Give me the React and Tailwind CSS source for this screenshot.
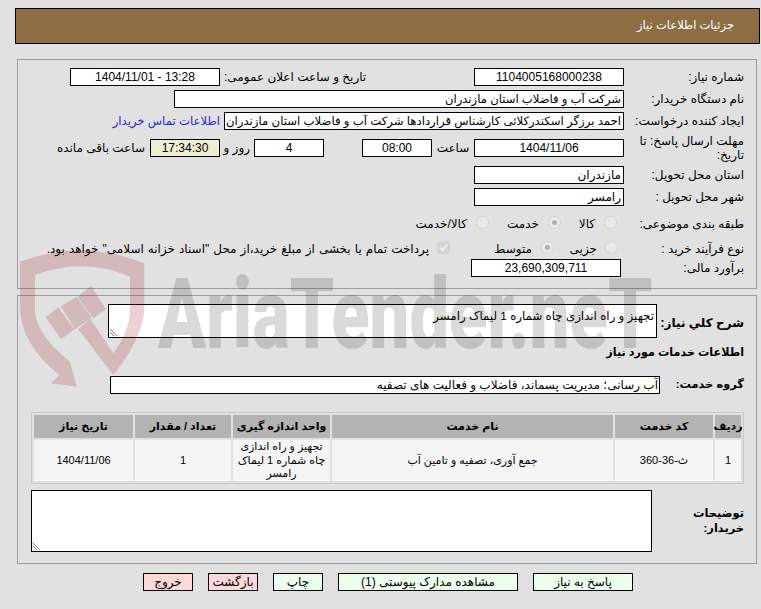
const Box = ({ className = "", children }) => (
  <div className={`h-[18px] shrink-0 border border-black flex items-center overflow-hidden whitespace-nowrap leading-none ${className.includes("bg-") ? "" : "bg-white"} ${className}`}>{children}</div>
);
const Radio = ({ checked }) => (
  <span className="w-[13px] h-[13px] rounded-full border border-[#d4d4d4] bg-[#e9e9e9] flex items-center justify-center shrink-0">
    {checked && <span className="w-[5px] h-[5px] rounded-full bg-[#b0b0b0]" />}
  </span>
);
const Btn = ({ w, red, children }) => (
  <div className={`h-[18px] shrink-0 border border-black flex items-center justify-center whitespace-nowrap ${w} ${red ? "bg-[#ffd9d9]" : "bg-[#ecffec]"}`}>{children}</div>
);
const Label = ({ className = "", children }) => <div className={`text-right shrink-0 ${className}`}>{children}</div>;
const Th = ({ w, children }) => <div className={`${w} h-[23px] bg-[#b3b3b3] flex items-center justify-center font-bold text-[11px] whitespace-nowrap`}>{children}</div>;
const Td = ({ w, children }) => <div className={`${w} h-[41px] bg-[#f5f5f5] flex items-center justify-center text-center text-[11px] leading-[13.5px]`}>{children}</div>;

export default function App() {
  return (
    <div dir="rtl" className="relative w-[761px] h-[609px] overflow-hidden bg-[#e1e1e1] text-[12px] text-black pt-[8px] pr-[1px] pl-[15px]" style={{ fontFamily: '"Liberation Sans", "DejaVu Sans", sans-serif' }}>
      <div className="h-[36px] bg-[#8d6e42] border border-black flex items-center pr-[25px] text-white text-[11.5px]">جزئیات اطلاعات نیاز</div>

      <section className="mt-[15px] mr-[3px] ml-[2px] h-[230px] border border-[#9d9d9d] pr-[12px] pt-[8px]">
        <div className="flex h-[18px] items-center">
          <Label className="w-[120px]">شماره نیاز:</Label>
          <Box className="w-[150px] justify-center">1104005168000238</Box>
          <div className="w-[254px] shrink-0 flex justify-end pl-[4px] whitespace-nowrap">تاریخ و ساعت اعلان عمومی:</div>
          <Box className="w-[150px] justify-center"><span dir="ltr">1404/11/01 - 13:28</span></Box>
        </div>
        <div className="flex h-[18px] items-center mt-[4px]">
          <Label className="w-[120px]">نام دستگاه خریدار:</Label>
          <Box className="w-[450px] px-[2px] text-[11.6px]">شرکت آب و فاضلاب استان مازندران</Box>
        </div>
        <div className="flex h-[18px] items-center mt-[4px]">
          <Label className="w-[120px] whitespace-nowrap">ایجاد کننده درخواست:</Label>
          <Box className="w-[400px] px-[2px] text-[11.7px]">احمد برزگر اسکندرکلائی کارشناس قراردادها شرکت آب و فاضلاب استان مازندران</Box>
          <div className="pr-[4px] text-[#2a2ad8] whitespace-nowrap text-[11.7px]">اطلاعات تماس خریدار</div>
        </div>
        <div className="flex h-[28px] items-center mt-[4px]">
          <Label className="w-[120px] leading-[14px] pl-[6px]">مهلت ارسال پاسخ: تا تاریخ:</Label>
          <Box className="w-[150px] justify-center">1404/11/06</Box>
          <div className="w-[42px] text-center">ساعت</div>
          <Box className="w-[70px] justify-center">08:00</Box>
          <div className="w-[38px]"></div>
          <Box className="w-[70px] justify-center">4</Box>
          <div className="w-[34px] pr-[4px]">روز و</div>
          <Box className="w-[70px] justify-center bg-[#eeeed2]">17:34:30</Box>
          <div className="pr-[5px] whitespace-nowrap">ساعت باقی مانده</div>
        </div>
        <div className="flex h-[18px] items-center mt-[4px]">
          <Label className="w-[120px]">استان محل تحویل:</Label>
          <Box className="w-[150px] px-[2px]">مازندران</Box>
        </div>
        <div className="flex h-[18px] items-center mt-[4px]">
          <Label className="w-[120px]">شهر محل تحویل :</Label>
          <Box className="w-[150px] px-[2px]">رامسر</Box>
        </div>
        <div className="flex h-[18px] items-center mt-[7px]">
          <Label className="w-[120px] pt-[3px]">طبقه بندی موضوعی:</Label>
          <div className="w-[7px]"></div>
          <Radio />
          <span className="w-[43px] pr-[9px] pt-[3px]">کالا</span>
          <Radio checked />
          <span className="w-[59px] pr-[9px] pt-[3px]">خدمت</span>
          <Radio />
          <span className="pr-[9px] pt-[3px]">کالا/خدمت</span>
        </div>
        <div className="flex h-[18px] items-center mt-[7px]">
          <Label className="w-[120px] pt-[3px]">نوع فرآیند خرید :</Label>
          <div className="w-[6px]"></div>
          <Radio />
          <span className="w-[51px] pr-[8px] pt-[3px]">جزیی</span>
          <Radio checked />
          <span className="w-[91px] pr-[9px] pt-[3px]">متوسط</span>
          <span className="w-[13px] h-[13px] rounded-[2px] bg-[#d4d4d4] flex items-center justify-center shrink-0">
            <svg viewBox="0 0 12 12" className="w-[11px] h-[11px]" fill="none" stroke="#f0f0f0" strokeWidth="2"><path d="M2 6l3 3 5-6" /></svg>
          </span>
          <span className="pr-[8px] pt-[3px] whitespace-nowrap [word-spacing:0.7px]">پرداخت تمام یا بخشی از مبلغ خرید،از محل "اسناد خزانه اسلامی" خواهد بود.</span>
        </div>
        <div className="flex h-[18px] items-center mt-[3px]">
          <Label className="w-[120px]">برآورد مالی:</Label>
          <div className="w-[3px]"></div>
          <Box className="w-[150px] justify-center">23,690,309,711</Box>
        </div>
      </section>

      <section className="mt-[6px] mr-[3px] ml-[2px] h-[269px] border border-[#9d9d9d] pr-[12px] pt-[8px]">
        <div className="flex items-center h-[34px]">
          <Label className="w-[87px] font-bold mt-[4px] whitespace-nowrap">شرح کلي نیاز:</Label>
          <div className="w-[549px] h-[34px] border border-black bg-white pr-[2px] pt-[3px] relative text-[11.8px]">
            تجهیز و راه اندازی چاه شماره 1 لیماک رامسر
            <Resize />
          </div>
        </div>
        <div className="font-bold mt-[6px] h-[17px] leading-[17px] text-[11.2px]">اطلاعات خدمات مورد نیاز</div>
        <div className="flex items-center h-[18px] mt-[15px]">
          <Label className="w-[84px] font-bold whitespace-nowrap text-[11.4px]">گروه خدمت:</Label>
          <Box className="w-[550px] px-[1px]">آب رسانی؛ مدیریت پسماند، فاضلاب و فعالیت های تصفیه</Box>
        </div>
        <div className="mt-[18px] w-[713px] border border-[#c8c8c8] p-[2px] flex flex-col gap-[2px]">
          <div className="flex gap-[2px]">
            <Th w="w-[26px]">ردیف</Th>
            <Th w="w-[98px]">کد خدمت</Th>
            <Th w="w-[281px]">نام خدمت</Th>
            <Th w="w-[97px]">واحد اندازه گیری</Th>
            <Th w="w-[96px]">تعداد / مقدار</Th>
            <Th w="w-[99px]">تاریخ نیاز</Th>
          </div>
          <div className="flex gap-[2px]">
            <Td w="w-[26px]">1</Td>
            <Td w="w-[98px]">ث-36-360</Td>
            <Td w="w-[281px]">جمع آوری، تصفیه و تامین آب</Td>
            <Td w="w-[97px]">تجهیز و راه اندازی چاه شماره 1 لیماک رامسر</Td>
            <Td w="w-[96px]">1</Td>
            <Td w="w-[99px]">1404/11/06</Td>
          </div>
        </div>
        <div className="flex items-center mt-[6px]">
          <Label className="w-[92px] font-bold leading-[15px] pl-[30px] text-[11.4px]">توضیحات خریدار:</Label>
          <div className="w-[621px] h-[62px] border border-black bg-white relative"><Resize /></div>
        </div>
      </section>

      <div className="flex justify-start gap-[15px] pr-[127px] mt-[9px]">
        <Btn w="w-[100px]">پاسخ به نیاز</Btn>
        <Btn w="w-[180px]">مشاهده مدارک پیوستی (1)</Btn>
        <Btn w="w-[50px]">چاپ</Btn>
        <Btn w="w-[50px]" red>بازگشت</Btn>
        <Btn w="w-[50px]" red>خروج</Btn>
      </div>

      <Watermark />
    </div>
  );
}

function Resize() {
  return (
    <svg className="absolute left-0 bottom-0 w-[9px] h-[9px]" viewBox="0 0 9 9" stroke="#666" strokeWidth="0.8">
      <path d="M1 1l7 7M1 4l4 4" />
    </svg>
  );
}

function Watermark() {
  return (
    <div dir="ltr" className="absolute left-[15px] top-[240px] w-[640px] h-[160px] pointer-events-none">
      <svg className="absolute left-0 top-0 opacity-20" width="160" height="160" viewBox="0 0 480 480" fill="#a02020">
        <path d="M15 65 Q200 -5 388 70 V210 Q380 300 295 405 L190 268 L225 235 L295 340 Q345 270 345 210 V110 Q205 50 60 105 V220 Q70 290 165 365 L185 440 L108 430 L133 405 Q15 310 15 200 Z" />
        <path d="M92 232 L130 202 L178 268 L138 298 Z" />
        <path d="M138 198 L185 170 L230 232 L180 268 Z" />
        <path d="M188 170 L228 138 L273 208 L235 235 Z" />
      </svg>
      <div className="absolute left-[143px] top-[26px] origin-left scale-x-[0.72] text-[98px] font-black leading-none text-black opacity-[0.14] whitespace-nowrap" style={{ fontFamily: '"Roboto", sans-serif' }}>AriaTender.neT</div>
    </div>
  );
}
